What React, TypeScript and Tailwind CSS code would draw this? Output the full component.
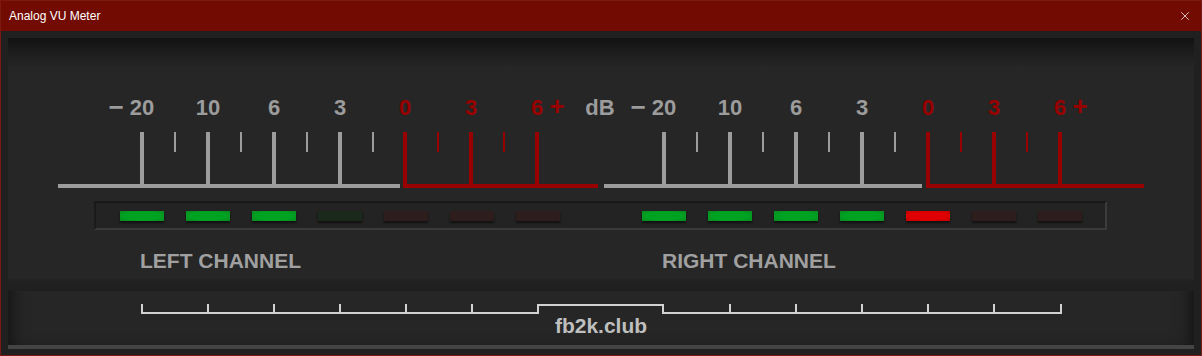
import { X } from "lucide-react";

const GRAY = "#9c9c9c";
const RED = "#990000";

type Led = "on" | "red" | "dimGreen" | "dimRed";

const leftLeds: Led[] = ["on", "on", "on", "dimGreen", "dimRed", "dimRed", "dimRed"];
const rightLeds: Led[] = ["on", "on", "on", "on", "red", "dimRed", "dimRed"];

const ledClass: Record<Led, string> = {
    on: "bg-[radial-gradient(ellipse_at_center,#00a321_55%,#0a8a22_100%)]",
    red: "bg-[radial-gradient(ellipse_at_center,#e00000_55%,#c00000_100%)]",
    dimGreen: "bg-[#1b281c]",
    dimRed: "bg-[#2e1d1d]",
};

function LedGroup({ leds }: { leds: Led[] }) {
    return (
        <div className="flex gap-[22px]">
            {leds.map((l, i) => (
                <div
                    key={i}
                    className={`w-[44px] h-[10px] ${ledClass[l]} shadow-[0_2px_2px_rgba(0,0,0,0.55)]`}
                />
            ))}
        </div>
    );
}

// scale drawing, page coordinates (panel x offset 8, svg top at page y 80)
function Scales() {
    const channel = (off: number, rOff: number) => (
        <g key={off}>
            {/* gray part */}
            <rect x={58 + (off ? 546 : 0)} y={184} width={off ? 318 : 342} height={4} fill={GRAY} />
            {[142, 208, 274, 340].map((c) => (
                <rect key={c} x={c + off - 2} y={132} width={4} height={56} fill={GRAY} />
            ))}
            {[175, 241, 307, 373].map((c) => (
                <rect key={c} x={c + off - 1} y={132} width={2} height={20} fill={GRAY} />
            ))}
            {/* red part */}
            <rect x={403 + rOff} y={184} width={off ? 218 : 195} height={4} fill={RED} />
            {[405, 471, 537].map((c) => (
                <rect key={c} x={c + rOff - 2} y={132} width={4} height={56} fill={RED} />
            ))}
            {[438, 504].map((c) => (
                <rect key={c} x={c + rOff - 1} y={132} width={2} height={20} fill={RED} />
            ))}
            <g textAnchor="middle">
                <text x={116 + off} y={116} fill={GRAY} className="text-[26px]">−</text>
                <text x={142 + off} y={115} fill={GRAY}>20</text>
                <text x={208 + off} y={115} fill={GRAY}>10</text>
                <text x={274 + off} y={115} fill={GRAY}>6</text>
                <text x={340 + off} y={115} fill={GRAY}>3</text>
                <text x={405 + rOff} y={115} fill={RED}>0</text>
                <text x={471 + rOff} y={115} fill={RED}>3</text>
                <text x={537 + rOff} y={115} fill={RED}>6</text>
                <text x={557 + rOff} y={115} fill={RED} className="text-[26px]">+</text>
            </g>
        </g>
    );
    return (
        <svg
            width={1186}
            height={112}
            viewBox="8 80 1186 112"
            className="block font-['Liberation_Sans',Arial,sans-serif] font-bold text-[22px]"
        >
            {channel(0, 0)}
            {channel(522, 523)}
            <text x={600} y={115} fill={GRAY} textAnchor="middle">
                dB
            </text>
        </svg>
    );
}

function Ruler() {
    const ticks = [208, 274, 340, 406, 472, 730, 796, 862, 928, 994];
    return (
        <svg width={1186} height={24} viewBox="8 291 1186 24" className="block">
            <g stroke="#d2d2d2" strokeWidth={2} fill="none">
                <polyline points="142,304 142,313 538,313 538,305 663,305 663,313 1061,313 1061,304" />
                {ticks.map((t) => (
                    <line key={t} x1={t} y1={304} x2={t} y2={313} />
                ))}
            </g>
        </svg>
    );
}

export default function App() {
    return (
        <div className="w-[1202px] h-[356px] border border-[#7a1a12] bg-[#202020] flex flex-col font-['Liberation_Sans',Arial,sans-serif]">
            {/* title bar */}
            <div className="h-[30px] bg-[#720b02] flex items-center justify-between pl-2 pr-[9px] shrink-0">
                <span className="text-white text-[12px] leading-none">Analog VU Meter</span>
                <X className="w-[14px] h-[14px] text-white" strokeWidth={1.25} />
            </div>

            {/* body */}
            <div className="flex-1 px-[7px] pt-[7px] pb-[6px]">
                <div className="h-full flex flex-col bg-[#262626] shadow-[inset_10px_0_18px_-8px_rgba(0,0,0,0.55),inset_-10px_0_18px_-8px_rgba(0,0,0,0.55)]">
                    {/* meter area */}
                    <div className="h-[253px] flex flex-col bg-[linear-gradient(to_bottom,#121212_0px,#1b1b1b_12px,#262626_30px,#262626_calc(100%-12px),#212121_calc(100%-11px),#1f1f1f_100%)]">
                        <div className="mt-[42px]">
                            <Scales />
                        </div>

                        <div className="mt-[9px] ml-[86px] w-[1013px] h-[29px] bg-[#232323] border-2 border-t-[#181818] border-l-[#1a1a1a] border-b-[#3b3b3b] border-r-[#3b3b3b] flex gap-[82px] pl-[24px] pt-[8px]">
                            <LedGroup leds={leftLeds} />
                            <LedGroup leds={rightLeds} />
                        </div>

                        <div className="mt-[20px] flex pl-[132px] text-[21px] leading-[21px] font-bold text-[#a0a0a0]">
                            <span className="w-[522px]">LEFT CHANNEL</span>
                            <span>RIGHT CHANNEL</span>
                        </div>
                    </div>

                    {/* lower ruler */}
                    <div className="flex-1 flex flex-col">
                        <Ruler />
                        <div className="text-center text-[21px] leading-[21px] font-bold text-[#bfbfbf]">
                            fb2k.club
                        </div>
                    </div>
                    <div className="h-[4px] bg-[#444444] shrink-0" />
                </div>
            </div>
        </div>
    );
}
